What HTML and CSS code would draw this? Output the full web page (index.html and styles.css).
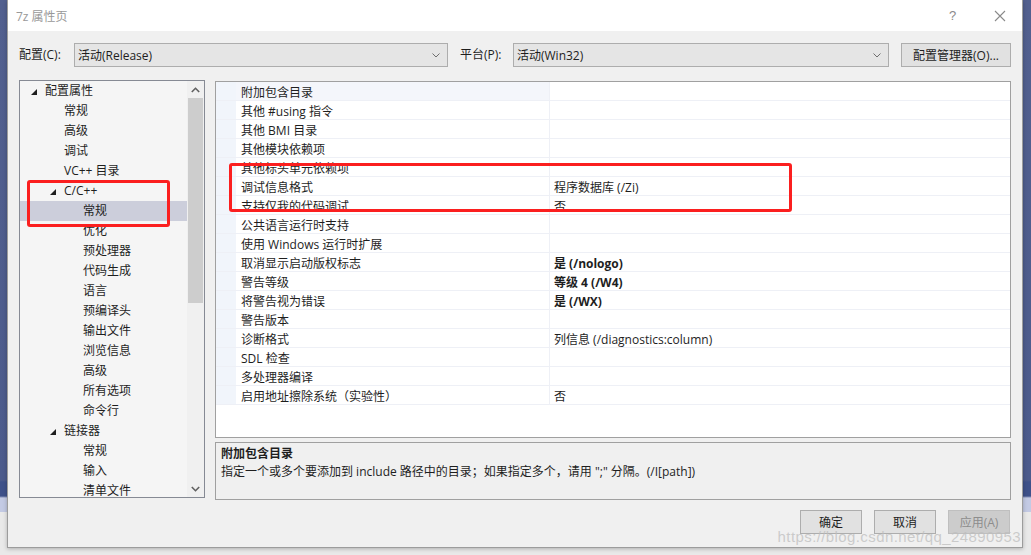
FILE: index.html
```html
<!DOCTYPE html>
<html lang="zh-CN">
<head>
<meta charset="utf-8">
<title>7z 属性页</title>
<link rel="stylesheet" href="styles.css">
</head>
<body>
<div class="desk desk-left"></div>
<div class="dialog">
  <div class="titlebar">
    <span class="title">7z 属性页</span>
    <span class="help">?</span>
    <span class="close"><svg width="12" height="12" viewBox="0 0 12 12"><path d="M1 1L11 11M11 1L1 11" stroke="#8a8a8a" stroke-width="1.1" fill="none"/></svg></span>
  </div>
  <div class="content">
    <div class="config-row">
      <span class="label label-config">配置(C):</span>
      <div class="combo combo-config"><span>活动(Release)</span><svg class="chev" width="8" height="5" viewBox="0 0 8 5"><path d="M0.5 0.5L4 4L7.5 0.5" stroke="#6e6e6e" fill="none"/></svg></div>
      <span class="label label-platform">平台(P):</span>
      <div class="combo combo-platform"><span>活动(Win32)</span><svg class="chev" width="8" height="5" viewBox="0 0 8 5"><path d="M0.5 0.5L4 4L7.5 0.5" stroke="#6e6e6e" fill="none"/></svg></div>
      <button class="btn btn-mgr">配置管理器(O)...</button>
    </div>
    <div class="main">
      <div class="tree">
        <div class="tree-list">
          <div class="node l0"><span class="tog"><i class="tri"></i></span>配置属性</div>
          <div class="node l1"><span class="tog"></span>常规</div>
          <div class="node l1"><span class="tog"></span>高级</div>
          <div class="node l1"><span class="tog"></span>调试</div>
          <div class="node l1"><span class="tog"></span>VC++ 目录</div>
          <div class="node l1"><span class="tog"><i class="tri"></i></span>C/C++</div>
          <div class="node l2 selected"><span class="tog"></span>常规</div>
          <div class="node l2"><span class="tog"></span>优化</div>
          <div class="node l2"><span class="tog"></span>预处理器</div>
          <div class="node l2"><span class="tog"></span>代码生成</div>
          <div class="node l2"><span class="tog"></span>语言</div>
          <div class="node l2"><span class="tog"></span>预编译头</div>
          <div class="node l2"><span class="tog"></span>输出文件</div>
          <div class="node l2"><span class="tog"></span>浏览信息</div>
          <div class="node l2"><span class="tog"></span>高级</div>
          <div class="node l2"><span class="tog"></span>所有选项</div>
          <div class="node l2"><span class="tog"></span>命令行</div>
          <div class="node l1"><span class="tog"><i class="tri"></i></span>链接器</div>
          <div class="node l2"><span class="tog"></span>常规</div>
          <div class="node l2"><span class="tog"></span>输入</div>
          <div class="node l2"><span class="tog"></span>清单文件</div>
        </div>
        <div class="scrollbar">
          <div class="sb-arrow"><svg width="9" height="6" viewBox="0 0 9 6"><path d="M0.8 5L4.5 1.3L8.2 5" stroke="#606060" stroke-width="1.6" fill="none"/></svg></div>
          <div class="sb-track"><div class="sb-thumb"></div></div>
          <div class="sb-arrow"><svg width="9" height="6" viewBox="0 0 9 6"><path d="M0.8 1L4.5 4.7L8.2 1" stroke="#606060" stroke-width="1.6" fill="none"/></svg></div>
        </div>
        <div class="annot annot-tree"></div>
      </div>
      <div class="right">
        <div class="grid">
          <div class="row first"><span class="gut"></span><span class="name">附加包含目录</span><span class="val"></span></div>
          <div class="row"><span class="gut"></span><span class="name">其他 #using 指令</span><span class="val"></span></div>
          <div class="row"><span class="gut"></span><span class="name">其他 BMI 目录</span><span class="val"></span></div>
          <div class="row"><span class="gut"></span><span class="name">其他模块依赖项</span><span class="val"></span></div>
          <div class="row"><span class="gut"></span><span class="name">其他标头单元依赖项</span><span class="val"></span></div>
          <div class="row"><span class="gut"></span><span class="name">调试信息格式</span><span class="val">程序数据库 (/Zi)</span></div>
          <div class="row"><span class="gut"></span><span class="name">支持仅我的代码调试</span><span class="val">否</span></div>
          <div class="row"><span class="gut"></span><span class="name">公共语言运行时支持</span><span class="val"></span></div>
          <div class="row"><span class="gut"></span><span class="name">使用 Windows 运行时扩展</span><span class="val"></span></div>
          <div class="row"><span class="gut"></span><span class="name">取消显示启动版权标志</span><span class="val bold">是 (/nologo)</span></div>
          <div class="row"><span class="gut"></span><span class="name">警告等级</span><span class="val bold">等级 4 (/W4)</span></div>
          <div class="row"><span class="gut"></span><span class="name">将警告视为错误</span><span class="val bold">是 (/WX)</span></div>
          <div class="row"><span class="gut"></span><span class="name">警告版本</span><span class="val"></span></div>
          <div class="row"><span class="gut"></span><span class="name">诊断格式</span><span class="val">列信息 (/diagnostics:column)</span></div>
          <div class="row"><span class="gut"></span><span class="name">SDL 检查</span><span class="val"></span></div>
          <div class="row"><span class="gut"></span><span class="name">多处理器编译</span><span class="val"></span></div>
          <div class="row"><span class="gut"></span><span class="name">启用地址擦除系统（实验性）</span><span class="val">否</span></div>
          <div class="annot annot-grid"></div>
        </div>
        <div class="desc">
          <div class="desc-title">附加包含目录</div>
          <div class="desc-text">指定一个或多个要添加到 include 路径中的目录；如果指定多个，请用 ";" 分隔。(/I[path])</div>
        </div>
      </div>
    </div>
    <div class="footer">
      <button class="btn btn-foot">确定</button>
      <button class="btn btn-foot">取消</button>
      <button class="btn btn-foot disabled">应用(A)</button>
    </div>
  </div>
  <div class="watermark">https://blog.csdn.net/qq_24890953</div>
</div>
<div class="desk desk-right"></div>
</body>
</html>
```

FILE: styles.css
```css
* { box-sizing: border-box; }
html, body { margin: 0; padding: 0; }
body {
  width: 1031px;
  height: 555px;
  overflow: hidden;
  display: flex;
  align-items: flex-start;
  background: #e9e9e9;
  font-family: "Open Sans", "Noto Sans CJK SC", sans-serif;
  font-size: 12px;
  color: #1e1e1e;
}
.desk {
  height: 512px;
  background: linear-gradient(to bottom, #52608f 0, #4c5b8c 480px, #3e518a 482px, #3e518a 496px, #c3cae4 498px, #c3cae4 512px);
}
.desk-left { width: 7px; flex: none; }
.desk-right { flex: 1; }

.dialog {
  position: relative;
  width: 1016px;
  height: 548px;
  flex: none;
  display: flex;
  flex-direction: column;
  background: #f0f0f0;
  border: 1px solid #9c9c9c;
  border-top: none;
  box-shadow: 0 1px 4px rgba(0,0,0,0.25);
}
.titlebar {
  height: 31px;
  flex: none;
  background: #fff;
  display: flex;
  align-items: center;
  padding-left: 8px;
  padding-right: 16px;
}
.title { color: #999; flex: 1; font-size: 12px; }
.help { color: #8a8a8a; font-size: 13px; width: 14px; margin-right: 31px; font-family: "Liberation Sans", sans-serif; }
.close { display: flex; width: 12px; height: 12px; }

.content {
  flex: 1;
  display: flex;
  flex-direction: column;
  padding: 12px 11px 0 11px;
}
.config-row {
  display: flex;
  align-items: center;
  height: 24px;
}
.label { line-height: 24px; }
.label-config { width: 55px; }
.label-platform { width: 53px; margin-left: 12px; }
.combo {
  height: 24px;
  display: flex;
  align-items: center;
  justify-content: space-between;
  padding: 0 7px 0 3px;
  background: #e5e5e5;
  border: 1px solid #adadad;
}
.combo-config { width: 374px; }
.combo-platform { width: 376px; }
.chev { flex: none; }
.btn {
  font: inherit;
  color: #1e1e1e;
  background: #e1e1e1;
  border: 1px solid #adadad;
  padding: 0;
  height: 24px;
}
.btn-mgr { width: 110px; margin-left: 12px; }

.main {
  display: flex;
  margin-top: 13px;
  gap: 10px;
}
.tree {
  position: relative;
  width: 186px;
  height: 418px;
  flex: none;
  display: flex;
  border: 1px solid #868a94;
  background: #f5f5f5;
  overflow: hidden;
}
.tree-list { flex: 1; overflow: hidden; }
.node {
  height: 20px;
  line-height: 20px;
  display: flex;
  align-items: center;
  white-space: nowrap;
}
.node.l0 { padding-left: 10px; }
.node.l1 { padding-left: 29px; }
.node.l2 { padding-left: 48px; }
.node.selected { background: #cccedb; }
.tog { width: 15px; height: 20px; flex: none; display: flex; align-items: center; }
.tri {
  display: block;
  width: 0; height: 0;
  margin-left: 1px;
  margin-top: 1px;
  border-style: solid;
  border-width: 0 0 6px 6px;
  border-color: transparent transparent #1e1e1e transparent;
}
.scrollbar {
  width: 17px;
  flex: none;
  display: flex;
  flex-direction: column;
  background: #f0f0f0;
}
.sb-arrow { height: 17px; display: flex; align-items: center; justify-content: center; flex: none; }
.sb-track { flex: 1; padding: 0 1px; }
.sb-thumb { height: 205px; background: #cdcdcd; }

.right {
  flex: 1;
  display: flex;
  flex-direction: column;
}
.grid {
  position: relative;
  margin-top: 1px;
  height: 357px;
  background: #fff;
  border: 1px solid #a0a0a0;
}
.row {
  display: flex;
  height: 19px;
  line-height: 19px;
  border-bottom: 1px solid #eef0f6;
  white-space: nowrap;
}
.gut { width: 20px; flex: none; background: #f1f5fb; }
.name { width: 314px; flex: none; padding: 1px 0 0 5px; border-right: 1px solid #eef0f6; }
.row.first .name { background: #f4f6fb; }
.val { flex: 1; padding: 1px 0 0 4px; }
.bold { font-weight: 700; }

.desc {
  margin-top: 4px;
  height: 58px;
  border: 1px solid #a0a0a0;
  background: #f0f0f0;
  padding: 2px 5px 0 5px;
}
.desc-title { font-weight: 700; line-height: 18px; }
.desc-text { line-height: 18px; }

.footer {
  display: flex;
  justify-content: flex-end;
  gap: 12px;
  margin-top: 10px;
  padding-right: 1px;
}
.btn-foot { width: 62px; }
.btn-foot.disabled { background: #cccccc; border-color: #bfbfbf; color: #8d8d8d; }

.annot {
  position: absolute;
  border: 3px solid #fb1f1f;
  border-radius: 3px;
  pointer-events: none;
}
.annot-tree { left: 7px; top: 99px; width: 143px; height: 47px; }
.annot-grid { left: 13px; top: 81px; width: 563px; height: 49px; }

.watermark {
  position: absolute;
  right: 1px;
  bottom: 2px;
  font-family: "Liberation Sans", sans-serif;
  font-size: 15px;
  color: rgba(190,190,190,0.75);
  letter-spacing: 0.4px;
  pointer-events: none;
}
```
